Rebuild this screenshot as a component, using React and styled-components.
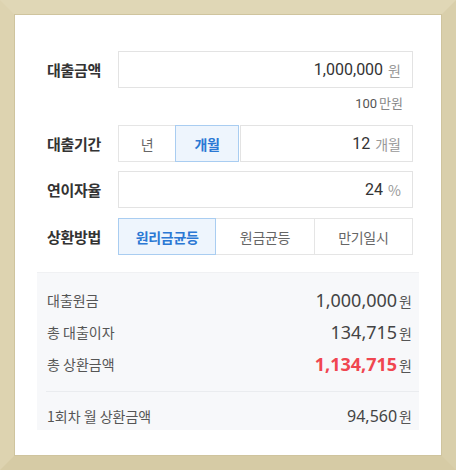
import styled, { createGlobalStyle } from "styled-components";

const GlobalStyle = createGlobalStyle`
  html, body { margin: 0; padding: 0; background: #fff; }
  body { font-family: "Noto Sans CJK KR", "Noto Sans", sans-serif; }
  * { box-sizing: border-box; }
`;

const App = () => {
  return (
    <>
      <GlobalStyle />
      <Frame>
        <Inner>
          <Form>
            <Row>
              <Label>대출금액</Label>
              <Field>
                <Num>1,000,000</Num>
                <Unit>원</Unit>
              </Field>
            </Row>
            <Hint>
              100<small>만원</small>
            </Hint>
            <Row $top={12}>
              <Label>대출기간</Label>
              <Controls $cols="58px 63px 1fr">
                <Toggle>년</Toggle>
                <Toggle $active>개월</Toggle>
                <Field $gap>
                  <Num>12</Num>
                  <Unit>개월</Unit>
                </Field>
              </Controls>
            </Row>
            <Row $top={9}>
              <Label>연이자율</Label>
              <Field>
                <Num>24</Num>
                <Unit>%</Unit>
              </Field>
            </Row>
            <Row $top={10}>
              <Label>상환방법</Label>
              <Controls $cols="1fr 1fr 1fr">
                <Toggle $active>원리금균등</Toggle>
                <Toggle>원금균등</Toggle>
                <Toggle>만기일시</Toggle>
              </Controls>
            </Row>
          </Form>
          <Summary>
            <SumRow>
              <SumLabel>대출원금</SumLabel>
              <SumValue>
                1,000,000<em>원</em>
              </SumValue>
            </SumRow>
            <SumRow>
              <SumLabel>총 대출이자</SumLabel>
              <SumValue>
                134,715<em>원</em>
              </SumValue>
            </SumRow>
            <SumRow>
              <SumLabel>총 상환금액</SumLabel>
              <SumValue $red>
                1,134,715<em>원</em>
              </SumValue>
            </SumRow>
            <Divider />
            <SumRow $last>
              <SumLabel>1회차 월 상환금액</SumLabel>
              <SumValue $small>
                94,560<em>원</em>
              </SumValue>
            </SumRow>
          </Summary>
        </Inner>
      </Frame>
    </>
  );
};

const Frame = styled.div`
  width: 456px;
  height: 470px;
  border-style: solid;
  border-width: 14px;
  border-color: #e0d7b6 #d9cfab #d6cba5 #ddd3b0;
`;

const Inner = styled.div`
  height: 100%;
  background: #fff;
  border: 1px solid #cfc49e;
  padding: 36px 22px 0;
`;

const Form = styled.div`
  padding: 0 6px 0 10px;
`;

const Row = styled.div`
  display: grid;
  grid-template-columns: 71px 1fr;
  align-items: center;
  height: 37px;
  margin-top: ${(p) => p.$top || 0}px;
`;

const Label = styled.div`
  font-size: 15px;
  font-weight: 700;
  color: #333;
  letter-spacing: -0.3px;
`;

const Field = styled.div`
  height: 37px;
  border: 1px solid #e3e3e3;
  display: flex;
  align-items: center;
  justify-content: flex-end;
  padding: 0 11px 0 10px;
  margin-left: ${(p) => (p.$gap ? "1px" : "0")};
`;

const Num = styled.span`
  font-family: Roboto, "Noto Sans CJK KR", sans-serif;
  font-size: 16px;
  color: #333;
`;

const Unit = styled.span`
  font-size: 14px;
  color: #999;
  margin-left: 5px;
`;

const Hint = styled.div`
  height: 20px;
  margin-top: 5px;
  text-align: right;
  padding-right: 10px;
  font-family: Roboto, "Noto Sans CJK KR", sans-serif;
  font-size: 13px;
  line-height: 20px;
  color: #555;
  small {
    font-family: "Noto Sans CJK KR", sans-serif;
    font-size: 13px;
    color: #888;
    margin-left: 2px;
  }
`;

const Controls = styled.div`
  display: grid;
  grid-template-columns: ${(p) => p.$cols};
  height: 37px;
`;

const Toggle = styled.div`
  display: flex;
  align-items: center;
  justify-content: center;
  height: 37px;
  font-size: 14px;
  letter-spacing: -0.3px;
  border: 1px solid ${(p) => (p.$active ? "#a9cdf1" : "#e5e5e5")};
  background: ${(p) => (p.$active ? "#eef5fd" : "#fff")};
  color: ${(p) => (p.$active ? "#2b78d4" : "#666")};
  font-weight: ${(p) => (p.$active ? 700 : 400)};
  position: relative;
  z-index: ${(p) => (p.$active ? 1 : 0)};
  & + & {
    margin-left: -1px;
  }
`;

const Summary = styled.div`
  margin-top: 17px;
  background: #f7f8fa;
  border-top: 1px solid #f0f1f3;
  padding: 11px 7px 0 10px;
`;

const SumRow = styled.div`
  display: flex;
  align-items: center;
  justify-content: space-between;
  height: ${(p) => (p.$last ? 28 : 32)}px;
  margin-top: ${(p) => (p.$last ? 10 : 0)}px;
`;

const SumLabel = styled.span`
  font-size: 14px;
  color: #555;
`;

const SumValue = styled.span`
  font-family: "Noto Sans", "Noto Sans CJK KR", sans-serif;
  font-size: ${(p) => (p.$small ? 16 : 18)}px;
  font-weight: ${(p) => (p.$red ? 700 : 400)};
  color: ${(p) => (p.$red ? "#f04650" : "#444")};
  em {
    font-style: normal;
    font-family: "Noto Sans CJK KR", sans-serif;
    font-weight: 400;
    font-size: 14px;
    color: #555;
    margin-left: 2px;
  }
`;

const Divider = styled.div`
  height: 1px;
  background: #eaecef;
  margin: 11px -7px 0 -1px;
`;

export default App;
